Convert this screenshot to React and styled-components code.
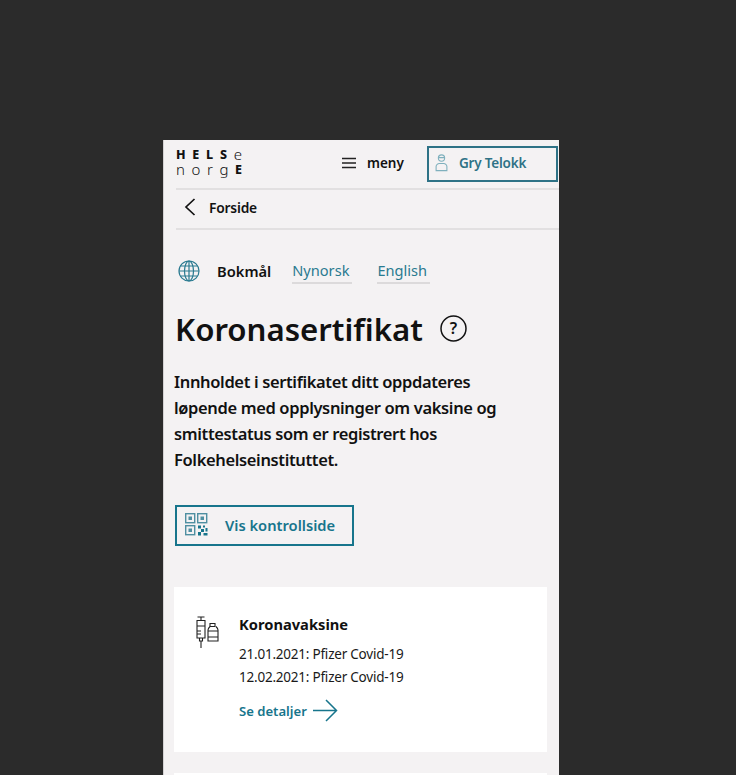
import React from 'react';
import styled, { createGlobalStyle } from 'styled-components';

const Global = createGlobalStyle`
  html, body {
    margin: 0;
    height: 100%;
    background: #2b2b2b;
    overflow: hidden;
  }
  body {
    font-family: 'Noto Sans', 'Open Sans', sans-serif;
  }
`;

const Page = styled.div`
  width: 396px;
  height: 635px;
  margin: 140px 0 0 163px;
  background: #f4f2f3;
  border-left: 1px solid #d4d2d3;
  box-sizing: border-box;
  overflow: hidden;
  color: #111;
`;

const Header = styled.header`
  height: 50px;
  margin-left: 12px;
  border-bottom: 2px solid #e2e0e1;
  box-sizing: border-box;
  display: flex;
  align-items: flex-start;
`;

const Logo = styled.div`
  width: 66px;
  margin-top: 7px;
  line-height: 15px;
`;

const LogoRow = styled.div`
  display: flex;
  justify-content: space-between;
`;

const LogoLetter = styled.span`
  font-weight: ${({ $bold }) => ($bold ? 800 : 300)};
  font-size: ${({ $bold }) => ($bold ? '12.5px' : '15px')};
`;

const MenuButton = styled.div`
  margin: 15px 0 0 100px;
  width: 85px;
  display: flex;
  align-items: center;
  gap: 11px;
  font-size: 13.5px;
  font-weight: 600;
  line-height: 16px;
`;

const UserButton = styled.div`
  margin-top: 6px;
  width: 131px;
  height: 36px;
  box-sizing: border-box;
  border: 2px solid #2e7286;
  display: flex;
  align-items: center;
  color: #2f7286;
  font-size: 13.5px;
  letter-spacing: -0.2px;
  font-weight: 600;
  padding: 0 0 3px 6px;
  gap: 11px;
`;

const Crumb = styled.nav`
  height: 40px;
  margin-left: 12px;
  border-bottom: 2px solid #e2e0e1;
  box-sizing: border-box;
  display: flex;
  align-items: center;
  padding: 0 0 4px 8px;
  gap: 13px;
  font-size: 13.8px;
  letter-spacing: -0.2px;
  font-weight: 600;
`;

const Languages = styled.div`
  display: flex;
  align-items: center;
  margin: 29px 0 0 14px;
  height: 24px;
`;

const Current = styled.span`
  font-size: 14.7px;
  font-weight: 600;
  margin: 0 21px 0 17px;
`;

const LangLink = styled.a`
  color: #2a7a90;
  font-size: 14.6px;
  border-bottom: 2px solid #dcdadb;
  padding-right: 3px;
  line-height: 23px;
  margin-right: 25px;
`;

const TitleRow = styled.div`
  display: flex;
  align-items: center;
  gap: 17px;
  margin: 23px 0 0 11px;
`;

const Title = styled.h1`
  margin: 0;
  font-size: 31.2px;
  line-height: 46px;
  font-weight: 600;
`;

const HelpWrap = styled.div`
  height: 27px;
  margin-bottom: 2px;
`;

const Lead = styled.p`
  margin: 17px 0 0 10px;
  width: 340px;
  font-size: 16.5px;
  letter-spacing: -0.36px;
  line-height: 26px;
  font-weight: 600;
`;

const ControlButton = styled.button`
  display: flex;
  align-items: center;
  width: 179px;
  height: 41px;
  margin: 32px 0 0 11px;
  padding: 0 0 2px 8px;
  gap: 17px;
  background: transparent;
  border: 2px solid #17758c;
  color: #17758c;
  font-family: inherit;
  font-size: 14.7px;
  font-weight: 600;
`;

const Card = styled.section`
  display: flex;
  width: 373px;
  height: 165px;
  margin: ${({ $first }) => ($first ? '41px' : '21px')} 0 0 10px;
  background: #fff;
  box-sizing: border-box;
  padding: 26px 0 0 22px;
  gap: 20px;
`;

const CardBody = styled.div`
  color: #1a1a1a;
`;

const CardTitle = styled.h2`
  margin: 0 0 8px;
  font-size: 14.7px;
  line-height: 22px;
  font-weight: 700;
  color: #111;
`;

const CardLine = styled.div`
  font-size: 13.5px;
  letter-spacing: -0.22px;
  line-height: 23px;
`;

const DetailsLink = styled.a`
  display: flex;
  align-items: center;
  gap: 6px;
  margin-top: 10px;
  color: #17758c;
  font-size: 13.1px;
  font-weight: 600;
`;

const VaccineWrap = styled.div`
  margin-top: 3px;
  height: 33px;
`;

const Hamburger = () => (
  <svg width="14" height="12" viewBox="0 0 14 12" fill="none" stroke="#222" strokeWidth="1.4">
    <path d="M0 1.5h14M0 6h14M0 10.5h14" />
  </svg>
);

const Person = () => (
  <svg width="13" height="18" viewBox="0 0 14 20" fill="none" stroke="#7fb0bd" strokeWidth="1.2">
    <circle cx="7" cy="4.5" r="3.5" />
    <path d="M3.5 4h7M1 18.5v-4.5c0-2 2-3.5 3.5-3.5h5c1.5 0 3.5 1.5 3.5 3.500v4.500z" />
  </svg>
);

const Chevron = () => (
  <svg width="12" height="18" viewBox="0 0 12 18" fill="none" stroke="#111" strokeWidth="1.7">
    <path d="M10.5 1L2 9l8.5 8" />
  </svg>
);

const Globe = () => (
  <svg width="22" height="22" viewBox="0 0 22 22" fill="none" stroke="#2a7a90" strokeWidth="1.2">
    <circle cx="11" cy="11" r="10" />
    <ellipse cx="11" cy="11" rx="4.5" ry="10" />
    <path d="M11 1v20M1 11h20M2.5 6h17M2.5 16h17" />
  </svg>
);

const Help = () => (
  <svg width="27" height="27" viewBox="0 0 27 27" fill="none">
    <circle cx="13.5" cy="13.5" r="12.5" stroke="#111" strokeWidth="1.5" />
    <text x="13.5" y="19" textAnchor="middle" fontSize="16" fontWeight="600" fill="#111" fontFamily="Noto Sans, sans-serif">?</text>
  </svg>
);

const Qr = () => (
  <svg width="23" height="23" viewBox="0 0 23 23" fill="none" stroke="#4f8fa1" strokeWidth="1.4">
    <rect x="0.7" y="0.7" width="9" height="9" />
    <rect x="12.7" y="0.7" width="9" height="9" />
    <rect x="0.7" y="12.7" width="9" height="9" />
    <path fill="#4f8fa1" stroke="none" d="M3.5 3.5h3.5v3.5H3.5zM15.500 3.5h3.5v3.5h-3.5zM3.5 15.500h3.5v3.5H3.5z" />
    <path fill="#17758c" stroke="none" d="M13 12.500h3v3h-3zM18 12.500h2v2h-2zM20.500 15h2v3.500h-2zM16 16h3v3h-3zM13 19h3v3.500h-3zM18.500 20h4v2.500h-4z" />
  </svg>
);

const Vaccine = () => (
  <svg width="23" height="33" viewBox="0 0 23 33" fill="none" stroke="#222" strokeWidth="1.1">
    <path d="M1.5 1h7M5 1v3.500M.5 4.500h9M1 4.500v17.500h8V4.500M1 10h8M1 15h4M1 18h4M3.5 22v3h3v-3M5 25v7" />
    <path d="M14 7.500h5v3h-5zM14 10.500c-1 1-2 2-2 3.500v11h10V14c0-1.500-1-2.500-2-3.500M12 15h10M12 21h10" />
  </svg>
);

const Arrow = () => (
  <svg width="25" height="23" viewBox="0 0 25 23" fill="none" stroke="#17758c" strokeWidth="1.5">
    <path d="M0 11.500h23M13 1l10.500 10.500L13 22" />
  </svg>
);

const App = () => (
  <>
    <Global />
    <Page>
      <Header>
        <Logo>
          <LogoRow>
            <LogoLetter $bold>H</LogoLetter>
            <LogoLetter $bold>E</LogoLetter>
            <LogoLetter $bold>L</LogoLetter>
            <LogoLetter $bold>S</LogoLetter>
            <LogoLetter>e</LogoLetter>
          </LogoRow>
          <LogoRow>
            <LogoLetter>n</LogoLetter>
            <LogoLetter>o</LogoLetter>
            <LogoLetter>r</LogoLetter>
            <LogoLetter>g</LogoLetter>
            <LogoLetter $bold>E</LogoLetter>
          </LogoRow>
        </Logo>
        <MenuButton>
          <Hamburger />
          meny
        </MenuButton>
        <UserButton>
          <Person />
          Gry Telokk
        </UserButton>
      </Header>
      <Crumb>
        <Chevron />
        Forside
      </Crumb>
      <Languages>
        <Globe />
        <Current>Bokmål</Current>
        <LangLink>Nynorsk</LangLink>
        <LangLink>English</LangLink>
      </Languages>
      <TitleRow>
        <Title>Koronasertifikat</Title>
        <HelpWrap>
          <Help />
        </HelpWrap>
      </TitleRow>
      <Lead>
        Innholdet i sertifikatet ditt oppdateres løpende med opplysninger om vaksine og
        smittestatus som er registrert hos Folkehelseinstituttet.
      </Lead>
      <ControlButton>
        <Qr />
        Vis kontrollside
      </ControlButton>
      <Card $first>
        <VaccineWrap>
          <Vaccine />
        </VaccineWrap>
        <CardBody>
          <CardTitle>Koronavaksine</CardTitle>
          <CardLine>21.01.2021: Pfizer Covid-19</CardLine>
          <CardLine>12.02.2021: Pfizer Covid-19</CardLine>
          <DetailsLink>
            Se detaljer
            <Arrow />
          </DetailsLink>
        </CardBody>
      </Card>
      <Card />
    </Page>
  </>
);

export default App;
